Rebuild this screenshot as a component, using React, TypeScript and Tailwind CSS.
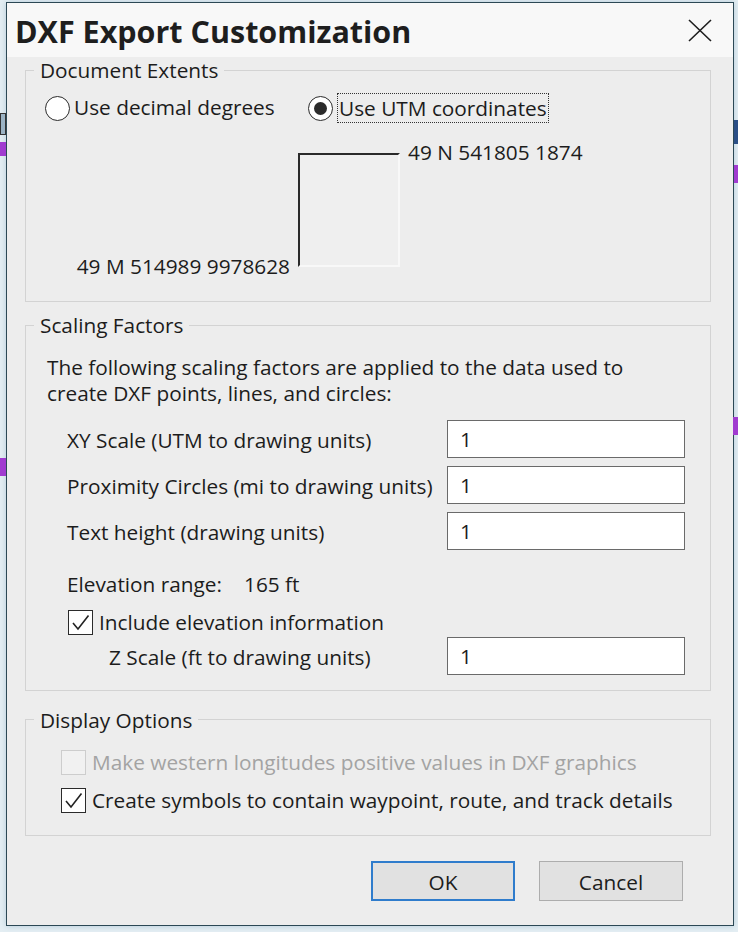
import React from 'react';

const font = { fontFamily: '"Open Sans", "Noto Sans", sans-serif' };

function Radio({ checked }: { checked?: boolean }) {
  return (
    <span className="flex h-[25px] w-[25px] shrink-0 items-center justify-center rounded-full border-[1.5px] border-[#2b2b2b] bg-white">
      {checked && <span className="h-[13px] w-[13px] rounded-full bg-[#2b2b2b]" />}
    </span>
  );
}

function Checkbox({ checked, disabled }: { checked?: boolean; disabled?: boolean }) {
  return (
    <span
      className={
        disabled
          ? 'flex h-[25px] w-[25px] shrink-0 items-center justify-center border-[1.5px] border-[#cdcdcd] bg-[#f1f1f1]'
          : 'flex h-[25px] w-[25px] shrink-0 items-center justify-center border-[1.5px] border-[#2b2b2b] bg-white'
      }
    >
      {checked && (
        <svg width="21" height="21" viewBox="0 0 21 21" fill="none">
          <path d="M3 11 L8 17 L18.5 3.5" stroke="#222" strokeWidth="1.6" />
        </svg>
      )}
    </span>
  );
}

function ScaleRow({ label, indent = 41, width = 380 }: { label: string; indent?: number; width?: number }) {
  return (
    <div className="flex h-[38px] items-center">
      <div className="whitespace-nowrap pt-[3px]" style={{ marginLeft: indent, width }}>
        {label}
      </div>
      <div className="flex h-[38px] w-[238px] items-center border border-[#6a6a6a] bg-white pl-[12px] pt-[2px]">1</div>
    </div>
  );
}

export default function App() {
  return (
    <div
      className="relative h-[932px] w-[738px] overflow-hidden bg-[#e4eef3] pl-[6px] pt-[2px] text-[20.8px] text-[#1c1c1c]"
      style={font}
    >
      {/* bits of the window behind */}
      <div className="absolute left-0 top-[113px] h-[22px] w-[6px] border border-[#333] bg-[#9bb3c4]" />
      <div className="absolute left-0 top-[142px] h-[14px] w-[6px] bg-[#a13bd0]" />
      <div className="absolute left-0 top-[458px] h-[18px] w-[6px] bg-[#a13bd0]" />
      <div className="absolute right-0 top-[120px] h-[24px] w-[4px] bg-[#2b4f86]" />
      <div className="absolute right-0 top-[165px] h-[18px] w-[4px] bg-[#a13bd0]" />
      <div className="absolute right-0 top-[417px] h-[18px] w-[5px] bg-[#a13bd0]" />

      <div className="flex h-[924px] w-[728px] flex-col border border-[#2c4855] bg-[#ededed] shadow-[0_0_6px_rgba(90,140,170,0.35)]">
        {/* title bar */}
        <div className="flex h-[54px] shrink-0 items-center justify-between bg-[#f8f8f8] pl-[8px] pr-[21px]">
          <div className="pt-[3px] text-[30.5px] font-bold leading-none text-[#1e1e1e]">DXF Export Customization</div>
          <svg width="24" height="23" viewBox="0 0 24 23" className="mt-[1px]">
            <path d="M1 1 L23 22 M23 1 L1 22" stroke="#1e1e1e" strokeWidth="1.6" />
          </svg>
        </div>

        {/* Document Extents */}
        <fieldset className="ml-[18px] w-[686px] border border-[#d3d3d3] pb-[22px]">
          <legend className="ml-[8px] px-[6px] leading-[26px]">Document Extents</legend>
          <div className="mt-[12px] flex h-[26px] items-center">
            <div className="ml-[19px] flex w-[263px] items-center gap-[4px]">
              <Radio />
              <span className="whitespace-nowrap">Use decimal degrees</span>
            </div>
            <div className="flex items-center gap-[4px]">
              <Radio checked />
              <span className="flex h-[30px] items-center whitespace-nowrap border border-dotted border-[#333] px-[1px] pt-[2px]">
                Use UTM coordinates
              </span>
            </div>
          </div>
          <div className="mt-[18px] flex items-start">
            <div className="mt-[114px] w-[264px] whitespace-nowrap text-right leading-[26px]">49 M 514989 9978628</div>
            <div className="ml-[8px] mt-[14px] h-[114px] w-[102px] border-b-2 border-l-2 border-r-2 border-t-2 border-b-[#f8f8f8] border-l-[#2a2a2a] border-r-[#f8f8f8] border-t-[#2a2a2a] bg-[#efefef]" />
            <div className="ml-[8px] whitespace-nowrap leading-[26px]">49 N 541805 1874</div>
          </div>
        </fieldset>

        {/* Scaling Factors */}
        <fieldset className="ml-[18px] mt-[10px] w-[686px] border border-[#d3d3d3] pb-[15px]">
          <legend className="ml-[8px] px-[6px] leading-[26px]">Scaling Factors</legend>
          <div className="ml-[21px] mt-[16px] whitespace-nowrap leading-[26px]">
            The following scaling factors are applied to the data used to
            <br />
            create DXF points, lines, and circles:
          </div>
          <div className="mt-[14px] flex flex-col gap-[8px]">
            <ScaleRow label="XY Scale (UTM to drawing units)" />
            <ScaleRow label="Proximity Circles (mi to drawing units)" />
            <ScaleRow label="Text height (drawing units)" />
          </div>
          <div className="ml-[41px] mt-[22px] flex h-[26px] items-center whitespace-nowrap">
            <span className="w-[177px]">Elevation range:</span>
            <span>165 ft</span>
          </div>
          <div className="ml-[42px] mt-[11px] flex h-[26px] items-center gap-[6px]">
            <Checkbox checked />
            <span className="whitespace-nowrap pt-[2px]">Include elevation information</span>
          </div>
          <div className="mt-[2px]">
            <ScaleRow label="Z Scale (ft to drawing units)" indent={83} width={338} />
          </div>
        </fieldset>

        {/* Display Options */}
        <fieldset className="ml-[18px] mt-[14px] w-[686px] border border-[#d3d3d3] pb-[22px]">
          <legend className="ml-[8px] px-[6px] pt-[2px] leading-[26px]">Display Options</legend>
          <div className="ml-[35px] mt-[16px] flex h-[26px] items-center gap-[6px]">
            <Checkbox disabled />
            <span className="whitespace-nowrap pt-[2px] text-[#a3a3a3]">
              Make western longitudes positive values in DXF graphics
            </span>
          </div>
          <div className="ml-[35px] mt-[12px] flex h-[26px] items-center gap-[6px]">
            <Checkbox checked />
            <span className="whitespace-nowrap pt-[2px]">Create symbols to contain waypoint, route, and track details</span>
          </div>
        </fieldset>

        {/* buttons */}
        <div className="mr-[50px] mt-[25px] flex justify-end gap-[24px]">
          <button className="flex h-[40px] w-[144px] items-center justify-center border-2 border-[#2f7ccc] bg-[#e1e1e1] pt-[3px]">
            OK
          </button>
          <button className="flex h-[40px] w-[144px] items-center justify-center border border-[#adadad] bg-[#e1e1e1] pt-[3px]">
            Cancel
          </button>
        </div>
      </div>
    </div>
  );
}
